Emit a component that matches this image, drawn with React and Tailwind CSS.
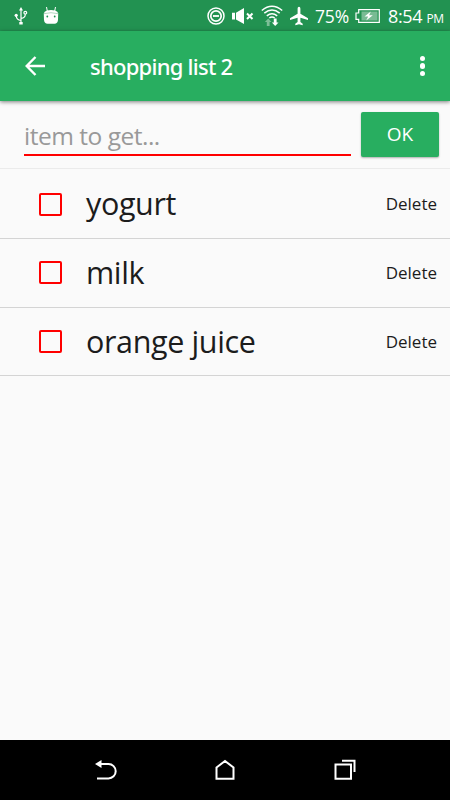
import { useState } from "react";

const StatusBar = () => {
  return (
    <div className="flex h-[31px] shrink-0 items-center bg-[#229251] text-white">
      <svg className="ml-[14px]" width="14" height="18" viewBox="0 0 14 18" fill="none" stroke="currentColor" strokeWidth="1.200">
        <path d="M7 2v13M7 13.500C3.500 13 2.500 12 2.200 9M7 11.500c3.500-.5 4.300-2 4.300-4.300" />
        <path d="M7 0l2 3.500H5zM5.300 15h3.400v2.500H5.300z" fill="currentColor" stroke="none" />
        <circle cx="2.200" cy="8.300" r="1.600" fill="currentColor" stroke="none" />
        <circle cx="11.300" cy="5.700" r="1.400" />
      </svg>
      <svg className="ml-[15px]" width="16" height="18" viewBox="0 0 16 18" fill="currentColor">
        <path d="M3.500 0l.8 4M12.500 0l-.8 4" stroke="currentColor" strokeWidth="1" />
        <path d="M.8 6.500Q1 4.300 4 3.500q4-1 8 0 3 .8 3.200 3l-.2 6.500Q14.500 16.800 11.500 16.800h-7Q1.500 16.800 1 13z" />
        <circle cx="4.300" cy="9.500" r=".9" fill="#229251" />
        <circle cx="11.700" cy="9.500" r=".9" fill="#229251" />
        <path d="M1 6.700q7-2 14 0" fill="none" stroke="#7dbf97" strokeWidth=".6" />
      </svg>
      <svg className="ml-[148px]" width="18" height="18" viewBox="0 0 18 18" fill="none" stroke="currentColor">
        <circle cx="9" cy="9" r="8" strokeWidth="1.500" />
        <circle cx="9" cy="9" r="5.200" strokeWidth="1.700" />
        <path d="M6 9h6" strokeWidth="1.800" />
      </svg>
      <svg className="ml-[7px]" width="22" height="18" viewBox="0 0 22 18" fill="currentColor">
        <path d="M0 5.800h3v6.700H0zM4 5.800L12 1v16l-8-4.500z" />
        <path d="M15 6.500l5.500 5.500M20.500 6.500L15 12" stroke="currentColor" strokeWidth="2" />
      </svg>
      <svg className="ml-[7px]" width="22" height="22" viewBox="0 0 22 22" fill="none" stroke="currentColor" strokeWidth="1.500">
        <path d="M.8 5.500q10.200-8.500 20.400 0M3.300 8.200q7.700-6.400 15.400 0M5.800 10.900q5.200-4.200 10.400 0M8.300 13q2.700-1.900 5.400 0" />
        <path d="M7.200 13.500l3.300 3.500H8.600v4H5.800v-4H3.900z" fill="#7dbf97" stroke="none" />
        <path d="M14.200 21l-3.300-3.500h1.900v-4h2.800v4h1.900z" fill="currentColor" stroke="none" />
      </svg>
      <svg className="ml-[6px]" width="20" height="20" viewBox="0 0 20 20" fill="currentColor">
        <path d="M10 .8c.8 0 1.400.9 1.400 2v5L19 12.300v1.800l-7.600-2.300v4.200l2.300 1.800v1.400L10 18.300l-3.700.9v-1.400L8.600 16v-4.200L1 14.100v-1.800l7.600-4.500v-5c0-1.100.6-2 1.400-2z" />
      </svg>
      <span className="mt-px ml-[6px] w-[36px] text-[17.500px] tracking-[-0.01em] whitespace-nowrap">75%</span>
      <svg className="ml-[4px]" width="25" height="14" viewBox="0 0 25 14">
        <path d="M3.700.7h20.600v12.600H3.700v-3H1V4h2.700z" fill="none" stroke="currentColor" strokeWidth="1.200" />
        <path d="M6.500 2.500h16v9h-16z" fill="#79bb94" />
        <path d="M15.800 2.500L9.500 7.500h3.700l-2 4 6.600-5.300h-3.700z" fill="currentColor" />
      </svg>
      <span className="mt-px ml-[8px] text-[18px] tracking-[-0.02em] whitespace-nowrap">
        8:54 <span className="text-[12px]">PM</span>
      </span>
    </div>
  )
}

const Toolbar = (props) => {
  return (
    <div className="relative z-10 flex h-[70px] shrink-0 items-center bg-[#28ae60] text-white shadow-[0_1px_4px_rgba(0,0,0,0.5)]">
      <button className="ml-[25px]">
        <svg width="21" height="20" viewBox="0 0 21 20" fill="none" stroke="currentColor" strokeWidth="2.400">
          <path d="M20 10H2M10.500 1L1.700 10l8.800 9" />
        </svg>
      </button>
      <h1 className="ml-[44px] font-['Noto_Sans',sans-serif] text-[22px] font-medium tracking-[-0.034em]">{props.title}</h1>
      <button className="mr-[25px] ml-auto flex flex-col gap-[2px]">
        <span className="size-[5.500px] rounded-full bg-white"></span>
        <span className="size-[5.500px] rounded-full bg-white"></span>
        <span className="size-[5.500px] rounded-full bg-white"></span>
      </button>
    </div>
  )
}

const ItemRow = (props) => {
  return (
    <li className="flex h-[68.700px] items-center border-b border-[#d4d4d4] pr-[13px] pl-[38.500px]">
      <button
        onClick={props.onToggle}
        className={props.item.done ? "size-[23px] rounded-[2px] border-2 border-[#ff0000] bg-[#ff0000]" : "size-[23px] rounded-[2px] border-2 border-[#ff0000]"}
      ></button>
      <span className="ml-[24.500px] text-[30.500px] tracking-[-0.012em] whitespace-nowrap text-[#1c1c1c]">{props.item.name}</span>
      <button className="ml-auto text-[17px] text-[#1c1c1c]" onClick={props.onDelete}>Delete</button>
    </li>
  )
}

const NavigationBar = () => {
  return (
    <div className="flex h-[60px] shrink-0 items-center bg-black text-white">
      <svg className="ml-[94px]" width="24" height="22" viewBox="0 0 24 22" fill="none" stroke="currentColor" strokeWidth="2">
        <path d="M6 5h8.500a7.200 7.200 0 0 1 0 14.400H3" />
        <path d="M1 5l6.500-4v8z" fill="currentColor" stroke="none" />
      </svg>
      <svg className="ml-[96px]" width="22" height="22" viewBox="0 0 22 22" fill="none" stroke="currentColor" strokeWidth="2">
        <path d="M2.500 8.500L11 2l8.500 6.500v11.200h-17z" />
      </svg>
      <svg className="ml-[97px]" width="24" height="22" viewBox="0 0 24 22" fill="none" stroke="currentColor" strokeWidth="2">
        <path d="M2.500 5.500H18v14.200H2.500zM9 1.800h12.500V13" />
      </svg>
    </div>
  )
}

export default function App() {
  const [text, setText] = useState("");
  const [items, setItems] = useState([
    { id: 1, name: "yogurt", done: false },
    { id: 2, name: "milk", done: false },
    { id: 3, name: "orange juice", done: false },
  ]);

  const onAddClick = (e) => {
    e.preventDefault()
    if (!text) return
    setItems([...items, { id: Date.now(), name: text, done: false }])
    setText("")
  }

  const onToggle = (id) => {
    setItems(items.map(item => item.id === id ? { ...item, done: !item.done } : item))
  }

  return (
    <div className="flex h-[800px] w-[450px] flex-col overflow-hidden bg-[#fafafa] font-['Open_Sans',sans-serif]">
      <StatusBar />
      <Toolbar title="shopping list 2" />
      <form className="flex h-[68px] shrink-0 items-start border-b border-[#ebebeb] pl-[24px]" onSubmit={onAddClick}>
        <input
          type="text"
          placeholder="item to get..."
          value={text}
          onChange={(e) => setText(e.target.value)}
          className="mt-[15px] h-[40px] w-[327px] border-b-2 border-[#ff0000] text-[24.500px] tracking-[-0.02em] outline-none placeholder:text-[#999999]"
        />
        <button className="mt-[11px] ml-[10px] h-[45px] w-[78px] rounded-[2px] bg-[#28ae60] text-[19px] text-white shadow-[0_1px_2px_rgba(0,0,0,0.3)]">
          OK
        </button>
      </form>
      <ul className="flex-1 pt-[1.200px]">
        {items.map(item =>
          <ItemRow
            key={item.id}
            item={item}
            onToggle={() => onToggle(item.id)}
            onDelete={() => setItems(items.filter(i => i.id !== item.id))}
          />
        )}
      </ul>
      <NavigationBar />
    </div>
  )
}
